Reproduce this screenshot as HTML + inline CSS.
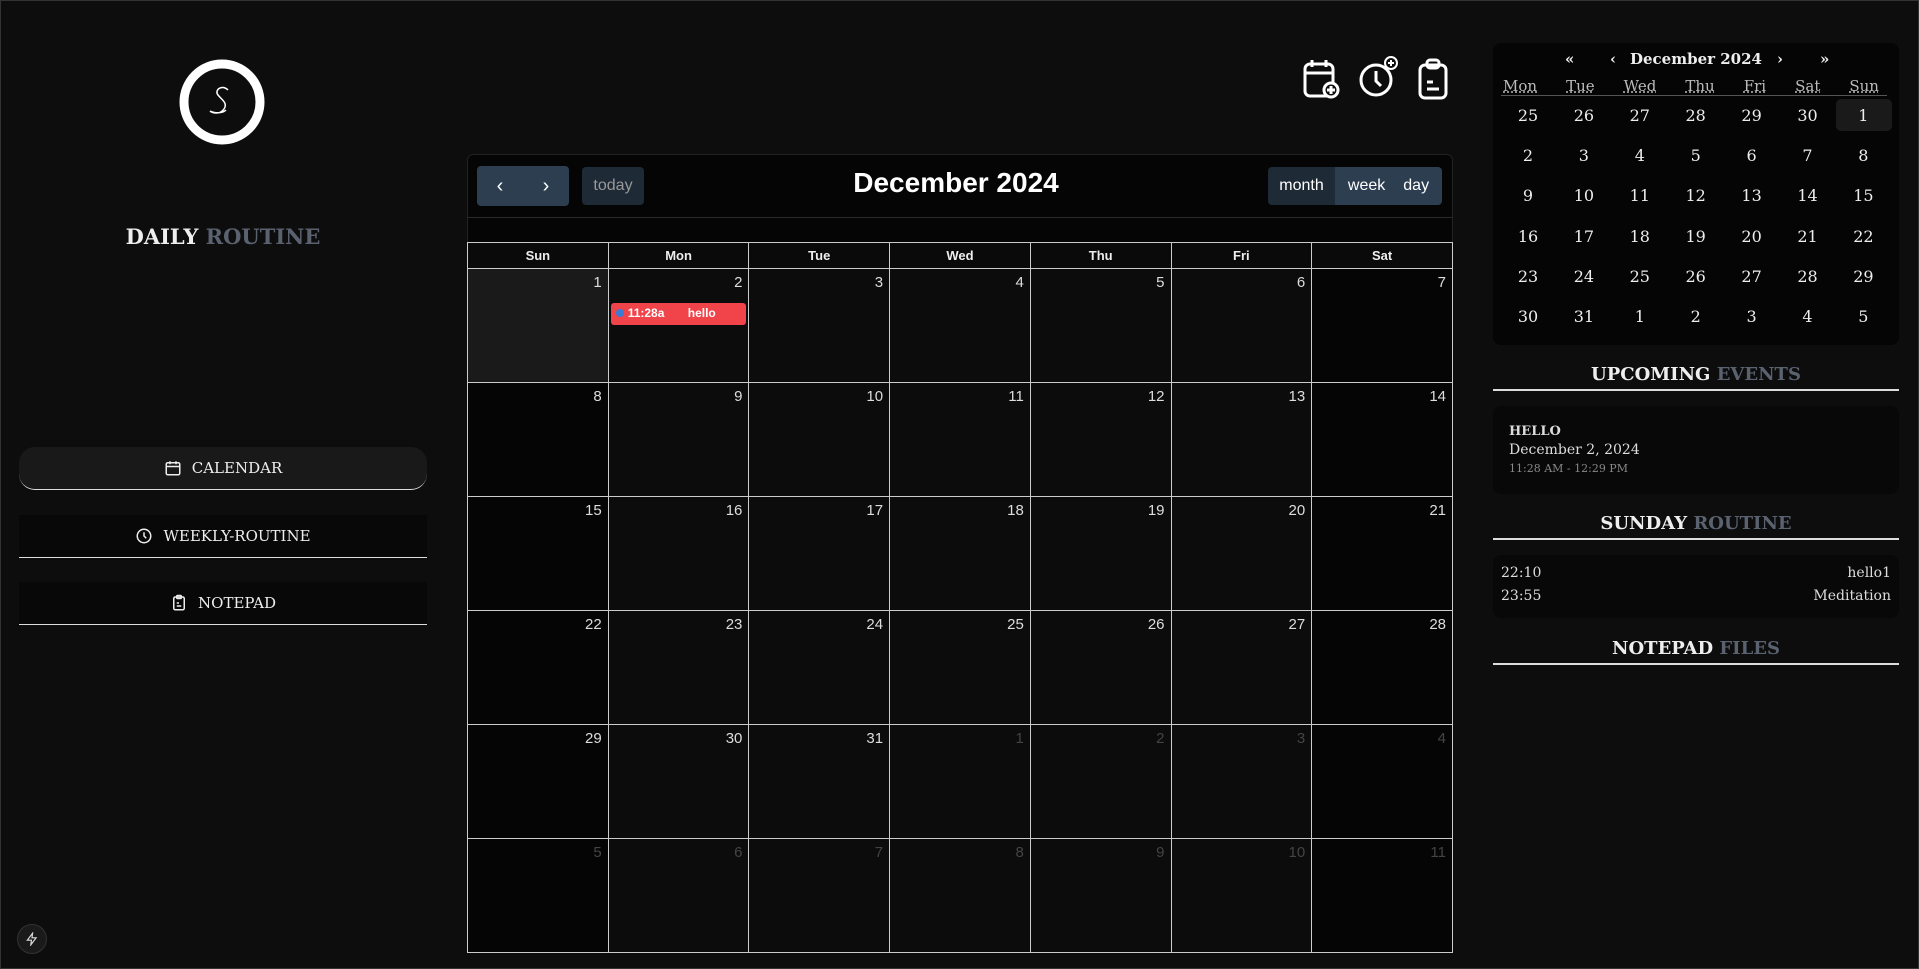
<!DOCTYPE html>
<html><head><meta charset="utf-8"><style>
*{box-sizing:border-box;margin:0;padding:0}
body{width:1919px;height:969px;background:#0d0d0d;color:#eee;font-family:"DejaVu Serif","Liberation Serif",serif;position:relative;overflow:hidden;border:1px solid #333}
.abs{position:absolute}
.title{font-weight:bold;text-align:center}
.title span{color:#5a6270}
.btn{position:absolute;left:18px;width:408px;height:43px;display:flex;align-items:center;justify-content:center;gap:10px;font-size:15px;color:#eee;background:#080808;border-bottom:1.5px solid #ddd}
.sans{font-family:"Liberation Sans",sans-serif}
table.cal{border-collapse:collapse;position:absolute;left:466px;top:241px;width:986px;font-family:"Liberation Sans",sans-serif}
table.cal th{height:26px;border:1px solid #ccc;font-size:13px;color:#eee;background:#0a0a0a}
table.cal td{height:114px;border:1px solid #ccc;vertical-align:top;text-align:right;padding:5px 6px;font-size:15px;color:#ddd;background:#0c0c0c;position:relative}
table.cal td.sat{background:#050505}
table.cal td.o{color:#444}
.mini{position:absolute;left:1492px;top:42px;width:406px;height:302px;background:#050505;border-radius:8px}
.card{position:absolute;left:1492px;width:406px;background:#080808;border-radius:8px}
.hr{position:absolute;left:1492px;width:406px;height:1.5px;background:#ddd}
</style></head><body>
<svg class="abs" style="left:175px;top:55px" width="92" height="92" viewBox="0 0 92 92"><circle cx="46" cy="46" r="38" fill="none" stroke="#fff" stroke-width="9"/><path d="M52 34c-6-6-14 0-10 5s10 8 6 14-12 4-14 2m0 0c4 2 12 3 16-1" fill="none" stroke="#fff" stroke-width="1.5"/></svg>
<div class="abs title" style="left:0;width:444px;top:223px;font-size:21px">DAILY <span>ROUTINE</span></div>
<div class="btn" style="top:446px;background:#191919;border-radius:16px"><svg width="18" height="18" viewBox="0 0 24 24" fill="none" stroke="#eee" stroke-width="2"><rect x="3" y="5" width="18" height="16" rx="2"/><path d="M8 3v4M16 3v4M3 10h18"/></svg>CALENDAR</div>
<div class="btn" style="top:514px"><svg width="18" height="18" viewBox="0 0 24 24" fill="none" stroke="#eee" stroke-width="2"><circle cx="12" cy="12" r="9"/><path d="M12 7v5l3 3"/></svg>WEEKLY-ROUTINE</div>
<div class="btn" style="top:581px"><svg width="18" height="18" viewBox="0 0 24 24" fill="none" stroke="#eee" stroke-width="2"><rect x="5" y="4" width="14" height="17" rx="2"/><rect x="9" y="2" width="6" height="4" rx="1"/><path d="M9 12h3M9 16h6"/></svg>NOTEPAD</div>
<div class="abs" style="left:16px;top:923px;width:30px;height:30px;border-radius:50%;background:#1a1a1a;border:1px solid #333;display:flex;align-items:center;justify-content:center"><svg width="14" height="14" viewBox="0 0 24 24" fill="none" stroke="#ddd" stroke-width="2"><path d="M13 2L4 14h7l-1 8 9-12h-7z"/></svg></div>

<svg class="abs" style="left:1301px;top:57px" width="38" height="42" viewBox="0 0 38 42" fill="none" stroke="#fff" stroke-width="3"><rect x="3" y="6" width="28" height="32" rx="5"/><path d="M10 2v7M24 2v7M3 15h28"/><circle cx="29" cy="32" r="7" fill="#0d0d0d"/><path d="M29 28v8M25 32h8"/></svg>
<svg class="abs" style="left:1358px;top:53px" width="40" height="44" viewBox="0 0 40 44" fill="none" stroke="#fff" stroke-width="3"><circle cx="17" cy="26" r="15"/><path d="M17 17v10l5 5"/><circle cx="32" cy="9" r="6" fill="#0d0d0d" stroke-width="2"/><path d="M32 6v6M29 9h6" stroke-width="2"/></svg>
<svg class="abs" style="left:1415px;top:57px" width="34" height="42" viewBox="0 0 34 42" fill="none" stroke="#fff" stroke-width="3"><rect x="4" y="7" width="26" height="33" rx="5"/><rect x="11" y="2" width="12" height="8" rx="3"/><path d="M11 24h6M11 31h12"/></svg>

<div class="abs" style="left:466px;top:153px;width:986px;height:797px;border:1px solid #222;border-radius:6px;background:#050505"></div>
<div class="abs" style="left:466px;top:216px;width:986px;height:1px;background:#2a2a2a"></div>
<div class="abs sans" style="left:476px;top:165px;width:92px;height:40px;background:#2c3e50;border-radius:4px;color:#fff;font-size:20px;display:flex;justify-content:space-around;align-items:center"><span>‹</span><span>›</span></div>
<div class="abs sans" style="left:581px;top:166px;width:62px;height:38px;background:#1e2a36;border-radius:4px;color:#999;font-size:16px;display:flex;justify-content:center;align-items:center">today</div>
<div class="abs sans" style="left:755px;width:400px;text-align:center;top:166px;font-size:28px;font-weight:bold;color:#fff">December 2024</div>
<div class="abs sans" style="left:1267px;top:166px;width:174px;height:38px;display:flex;font-size:16px;color:#fff;border-radius:4px;overflow:hidden"><div style="width:67px;background:#1e2a36;display:flex;align-items:center;justify-content:center">month</div><div style="flex:1;background:#2c3e50;display:flex;align-items:center;justify-content:center;gap:18px"><span>week</span><span>day</span></div></div>

<table class="cal">
<tr><th>Sun</th><th>Mon</th><th>Tue</th><th>Wed</th><th>Thu</th><th>Fri</th><th>Sat</th></tr>
<tr><td style="background:#1a1a1a">1</td><td>2<div class="abs" style="left:2px;top:34px;width:135px;height:22px;background:#f0434a;border-radius:3px;font-size:12px;font-weight:bold;color:#fff;text-align:left;padding:3px 5px"><span style="display:inline-block;width:8px;height:8px;border-radius:50%;background:#3a7bd5;margin-right:4px"></span>11:28a&nbsp;&nbsp;&nbsp;&nbsp;&nbsp;&nbsp;&nbsp;hello</div></td><td>3</td><td>4</td><td>5</td><td>6</td><td class="sat">7</td></tr>
<tr><td class="sat">8</td><td>9</td><td>10</td><td>11</td><td>12</td><td>13</td><td class="sat">14</td></tr>
<tr><td class="sat">15</td><td>16</td><td>17</td><td>18</td><td>19</td><td>20</td><td class="sat">21</td></tr>
<tr><td class="sat">22</td><td>23</td><td>24</td><td>25</td><td>26</td><td>27</td><td class="sat">28</td></tr>
<tr><td class="sat">29</td><td>30</td><td>31</td><td class="o">1</td><td class="o">2</td><td class="o">3</td><td class="sat o">4</td></tr>
<tr><td class="sat o">5</td><td class="o">6</td><td class="o">7</td><td class="o">8</td><td class="o">9</td><td class="o">10</td><td class="sat o">11</td></tr>
</table>

<div class="mini">
<div class="abs" style="left:0;width:406px;top:7px;text-align:center;font-size:15px;font-weight:bold"><span style="position:absolute;left:72px;top:0">«</span><span style="position:absolute;left:117px">‹</span>December 2024<span style="position:absolute;left:284px">›</span><span style="position:absolute;left:327px">»</span></div>
<div class="abs" style="left:8px;top:34px;width:386px;display:flex;justify-content:space-between;font-size:15px;color:#bbb;border-bottom:1px solid #555;text-decoration:underline dotted;padding:0 8px 0 2px;line-height:18px"><span>Mon</span><span>Tue</span><span>Wed</span><span>Thu</span><span>Fri</span><span>Sat</span><span>Sun</span></div>
<div class="abs" style="left:343px;top:56px;width:56px;height:32px;background:#1a1a1a;border-radius:5px"></div>
</div>
<div id="md"></div>
<script>
var r=[[25,26,27,28,29,30,1],[2,3,4,5,6,7,8],[9,10,11,12,13,14,15],[16,17,18,19,20,21,22],[23,24,25,26,27,28,29],[30,31,1,2,3,4,5]],h='';
r.forEach(function(w,i){w.forEach(function(d,j){h+='<div class="abs" style="left:'+(1499+j*55.9)+'px;top:'+(105+i*40.2)+'px;width:56px;text-align:center;font-size:16px;color:#eee">'+d+'</div>'})});
document.getElementById('md').innerHTML=h;
</script>

<div class="abs title" style="left:1492px;width:406px;top:363px;font-size:18px">UPCOMING <span>EVENTS</span></div>
<div class="hr" style="top:388px"></div>
<div class="card" style="top:405px;height:88px"><div class="abs" style="left:16px;top:18px;font-size:13px;font-weight:bold;color:#ddd">HELLO</div><div class="abs" style="left:16px;top:36px;font-size:14px;color:#ddd">December 2, 2024</div><div class="abs" style="left:16px;top:56px;font-size:11px;color:#888">11:28 AM - 12:29 PM</div></div>
<div class="abs title" style="left:1492px;width:406px;top:512px;font-size:18px">SUNDAY <span>ROUTINE</span></div>
<div class="hr" style="top:537px"></div>
<div class="card" style="top:554px;height:63px;font-size:14px;color:#ddd"><div class="abs" style="left:8px;top:10px">22:10</div><div class="abs" style="right:8px;top:10px">hello1</div><div class="abs" style="left:8px;top:33px">23:55</div><div class="abs" style="right:8px;top:33px">Meditation</div></div>
<div class="abs title" style="left:1492px;width:406px;top:637px;font-size:18px">NOTEPAD <span>FILES</span></div>
<div class="hr" style="top:662px"></div>
</body></html>
